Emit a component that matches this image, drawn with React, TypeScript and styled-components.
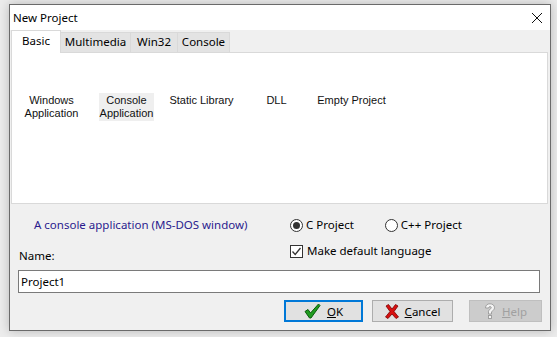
import React from 'react';
import styled, { createGlobalStyle } from 'styled-components';

const GlobalStyle = createGlobalStyle`
  html, body {
    margin: 0;
    padding: 0;
    background: #ececec;
  }
  body {
    font-family: "Noto Sans", "Open Sans", sans-serif;
    font-size: 11.5px;
    color: #000;
  }
`;

const templates = ['Windows Application', 'Console Application', 'Static Library', 'DLL', 'Empty Project'];
const tabs = [
    { label: 'Basic', width: 50 },
    { label: 'Multimedia', width: 71 },
    { label: 'Win32', width: 48 },
    { label: 'Console', width: 53 },
];

const CheckIcon = () => (
    <svg width="17" height="16" viewBox="0 0 17 16">
        <path d="M1 8.5 L4 6.5 L6.5 10 L14.5 1 L16 2.5 L7 15 L5.5 15 Z" fill="#1f9b1f" stroke="#0b5a0b" strokeWidth="1" strokeLinejoin="round" />
    </svg>
);

const CrossIcon = () => (
    <svg width="14" height="15" viewBox="0 0 14 15">
        <path d="M1 2 L3.5 0.5 L7 5 L10.5 0.5 L13 2 L9 7.5 L13.5 13 L11 14.5 L7 10 L3 14.5 L0.5 13 L5 7.5 Z" fill="#d81010" stroke="#7a0000" strokeWidth="0.8" strokeLinejoin="round" />
    </svg>
);

const HelpIcon = () => (
    <svg width="12" height="17" viewBox="0 0 12 17">
        <path d="M1.5 5 C1.5 2 3.5 0.8 6 0.8 C8.8 0.8 10.5 2.5 10.5 4.8 C10.5 7 8.5 7.8 7.5 8.8 L7.5 11 L4.5 11 L4.5 8.2 C4.5 6.5 7.3 6 7.3 4.8 C7.3 4 6.8 3.6 6 3.6 C5.1 3.6 4.7 4.2 4.7 5 Z" fill="#f4f4f4" stroke="#9a9a9a" strokeWidth="0.9" />
        <rect x="4.5" y="12.5" width="3" height="3" fill="#f4f4f4" stroke="#9a9a9a" strokeWidth="0.9" />
    </svg>
);

// two-line labels wrap at the space, one-line labels stay on a line
const twoLine = (name: string) => name === 'Windows Application' || name === 'Console Application';

const App = (): JSX.Element => {
    return (
        <Screen>
            <GlobalStyle />
            <Window>
                <TitleBar>
                    <Title>New Project</Title>
                    <svg width="10" height="10" viewBox="0 0 10 10">
                        <path d="M0 0 L10 10 M10 0 L0 10" stroke="#111" strokeWidth="1" />
                    </svg>
                </TitleBar>
                <Body>
                    <TabStrip>
                        {tabs.map((tab, i) => (
                            <Tab key={tab.label} $active={i === 0} $width={tab.width}>
                                {tab.label}
                            </Tab>
                        ))}
                    </TabStrip>
                    <Panel>
                        <TemplateRow>
                            {templates.map((name) => (
                                <TemplateCell key={name}>
                                    <TemplateLabel $selected={name === 'Console Application'} $wrap={twoLine(name)}>
                                        {name}
                                    </TemplateLabel>
                                </TemplateCell>
                            ))}
                        </TemplateRow>
                    </Panel>
                    <Options>
                        <LeftCol>
                            <Description>A console application (MS-DOS window)</Description>
                            <FieldLabel>Name:</FieldLabel>
                        </LeftCol>
                        <RightCol>
                            <RadioGroup>
                                <Choice>
                                    <Radio $checked />
                                    C Project
                                </Choice>
                                <Choice>
                                    <Radio />
                                    C++ Project
                                </Choice>
                            </RadioGroup>
                            <Choice>
                                <CheckBox>
                                    <svg width="11" height="11" viewBox="0 0 11 11">
                                        <path d="M1.5 5.5 L4.2 8.5 L9.5 2" fill="none" stroke="#333" strokeWidth="1.3" />
                                    </svg>
                                </CheckBox>
                                Make default language
                            </Choice>
                        </RightCol>
                    </Options>
                    <NameInput defaultValue="Project1" />
                    <ButtonRow>
                        <Button $width={79} $primary>
                            <CheckIcon />
                            <span>
                                <u>O</u>K
                            </span>
                        </Button>
                        <Button $width={81}>
                            <CrossIcon />
                            <span>
                                <u>C</u>ancel
                            </span>
                        </Button>
                        <Button $width={73} $disabled>
                            <HelpIcon />
                            <span>
                                <u>H</u>elp
                            </span>
                        </Button>
                    </ButtonRow>
                </Body>
            </Window>
        </Screen>
    );
};

const Screen = styled.div`
    width: 557px;
    height: 337px;
    padding: 4px 0 0 9px;
    box-sizing: border-box;
    overflow: hidden;
`;

const Window = styled.div`
    width: 542px;
    height: 327px;
    box-sizing: border-box;
    border: 1px solid #6a6a6a;
    background: #f0f0f0;
    box-shadow: 0 0 10px rgba(0, 0, 0, 0.22);
    display: flex;
    flex-direction: column;
`;

const TitleBar = styled.div`
    height: 25px;
    flex: none;
    background: #fff;
    display: flex;
    align-items: center;
    justify-content: space-between;
    padding: 0 8px 0 3px;
`;

const Title = styled.span`
    font-size: 11.5px;
    color: #000;
`;

const Body = styled.div`
    flex: 1;
    display: flex;
    flex-direction: column;
    padding: 0 2px 0 1px;
`;

const TabStrip = styled.div`
    display: flex;
    align-items: flex-end;
    height: 22px;
`;

const Tab = styled.div<{ $active?: boolean; $width: number }>`
    position: relative;
    z-index: ${({ $active }) => ($active ? 1 : 0)};
    box-sizing: border-box;
    width: ${({ $width }) => $width}px;
    height: ${({ $active }) => ($active ? 23 : 20)}px;
    margin-bottom: ${({ $active }) => ($active ? -1 : 0)}px;
    padding-top: ${({ $active }) => ($active ? 2 : 1)}px;
    text-align: center;
    background: ${({ $active }) => ($active ? '#fff' : '#e3e3e3')};
    border: 1px solid #d9d9d9;
    border-bottom: none;
    margin-right: -1px;
    line-height: 16px;
`;

const Panel = styled.div`
    box-sizing: border-box;
    width: 537px;
    height: 152px;
    background: #fff;
    border: 1px solid #d9d9d9;
    padding: 40px 0 0 2px;
`;

const TemplateRow = styled.div`
    display: flex;
`;

const TemplateCell = styled.div`
    width: 75px;
    display: flex;
    justify-content: center;
`;

const TemplateLabel = styled.div<{ $selected?: boolean; $wrap?: boolean }>`
    font-family: "Liberation Sans", Arial, sans-serif;
    font-size: 11px;
    line-height: 13px;
    color: #111;
    text-align: center;
    padding: 1px;
    width: ${({ $wrap }) => ($wrap ? 'min-content' : 'auto')};
    white-space: ${({ $wrap }) => ($wrap ? 'normal' : 'nowrap')};
    background: ${({ $selected }) => ($selected ? '#efefef' : 'transparent')};
`;

const Options = styled.div`
    display: grid;
    grid-template-columns: 279px 1fr;
    height: 47px;
    padding-top: 13px;
`;

const LeftCol = styled.div`
    display: flex;
    flex-direction: column;
`;

const Description = styled.div`
    margin-left: 23px;
    line-height: 16px;
    color: #2a1b8e;
`;

const FieldLabel = styled.div`
    margin: 15px 0 0 8px;
    line-height: 16px;
`;

const RightCol = styled.div`
    display: flex;
    flex-direction: column;
    gap: 10px;
`;

const RadioGroup = styled.div`
    display: flex;
    gap: 31px;
`;

const Choice = styled.label`
    display: flex;
    align-items: center;
    gap: 3px;
    height: 16px;
    line-height: 16px;
`;

const Radio = styled.span<{ $checked?: boolean }>`
    box-sizing: border-box;
    width: 13px;
    height: 13px;
    border-radius: 50%;
    border: 1px solid #333;
    background: #fff;
    display: flex;
    align-items: center;
    justify-content: center;
    &::after {
        content: '';
        width: 7px;
        height: 7px;
        border-radius: 50%;
        background: #333;
        display: ${({ $checked }) => ($checked ? 'block' : 'none')};
    }
`;

const CheckBox = styled.span`
    box-sizing: border-box;
    width: 13px;
    height: 13px;
    border: 1px solid #333;
    background: #fff;
    display: flex;
    align-items: center;
    justify-content: center;
    margin-right: 1px;
`;

const NameInput = styled.input`
    box-sizing: border-box;
    width: 522px;
    height: 23px;
    margin: 6px 0 0 7px;
    padding: 0 2px;
    border: 1px solid #7a7a7a;
    background: #fff;
    font-family: "Noto Sans", "Open Sans", sans-serif;
    font-size: 11.5px;
    color: #000;
    outline: none;
`;

const ButtonRow = styled.div`
    display: flex;
    justify-content: flex-end;
    gap: 9px;
    margin-top: 7px;
    padding-right: 6px;
    & > :last-child {
        margin-left: 7px;
    }
`;

const Button = styled.button<{ $width: number; $primary?: boolean; $disabled?: boolean }>`
    box-sizing: border-box;
    width: ${({ $width }) => $width}px;
    height: 22px;
    padding: 0;
    display: flex;
    align-items: center;
    justify-content: center;
    gap: 6px;
    font-family: "Noto Sans", "Open Sans", sans-serif;
    font-size: 11.5px;
    color: ${({ $disabled }) => ($disabled ? '#a0a0a0' : '#000')};
    background: ${({ $disabled }) => ($disabled ? '#cccccc' : '#e1e1e1')};
    border: ${({ $primary, $disabled }) =>
        $primary ? '2px solid #0078d7' : $disabled ? '1px solid #bfbfbf' : '1px solid #adadad'};
`;

export default App;
